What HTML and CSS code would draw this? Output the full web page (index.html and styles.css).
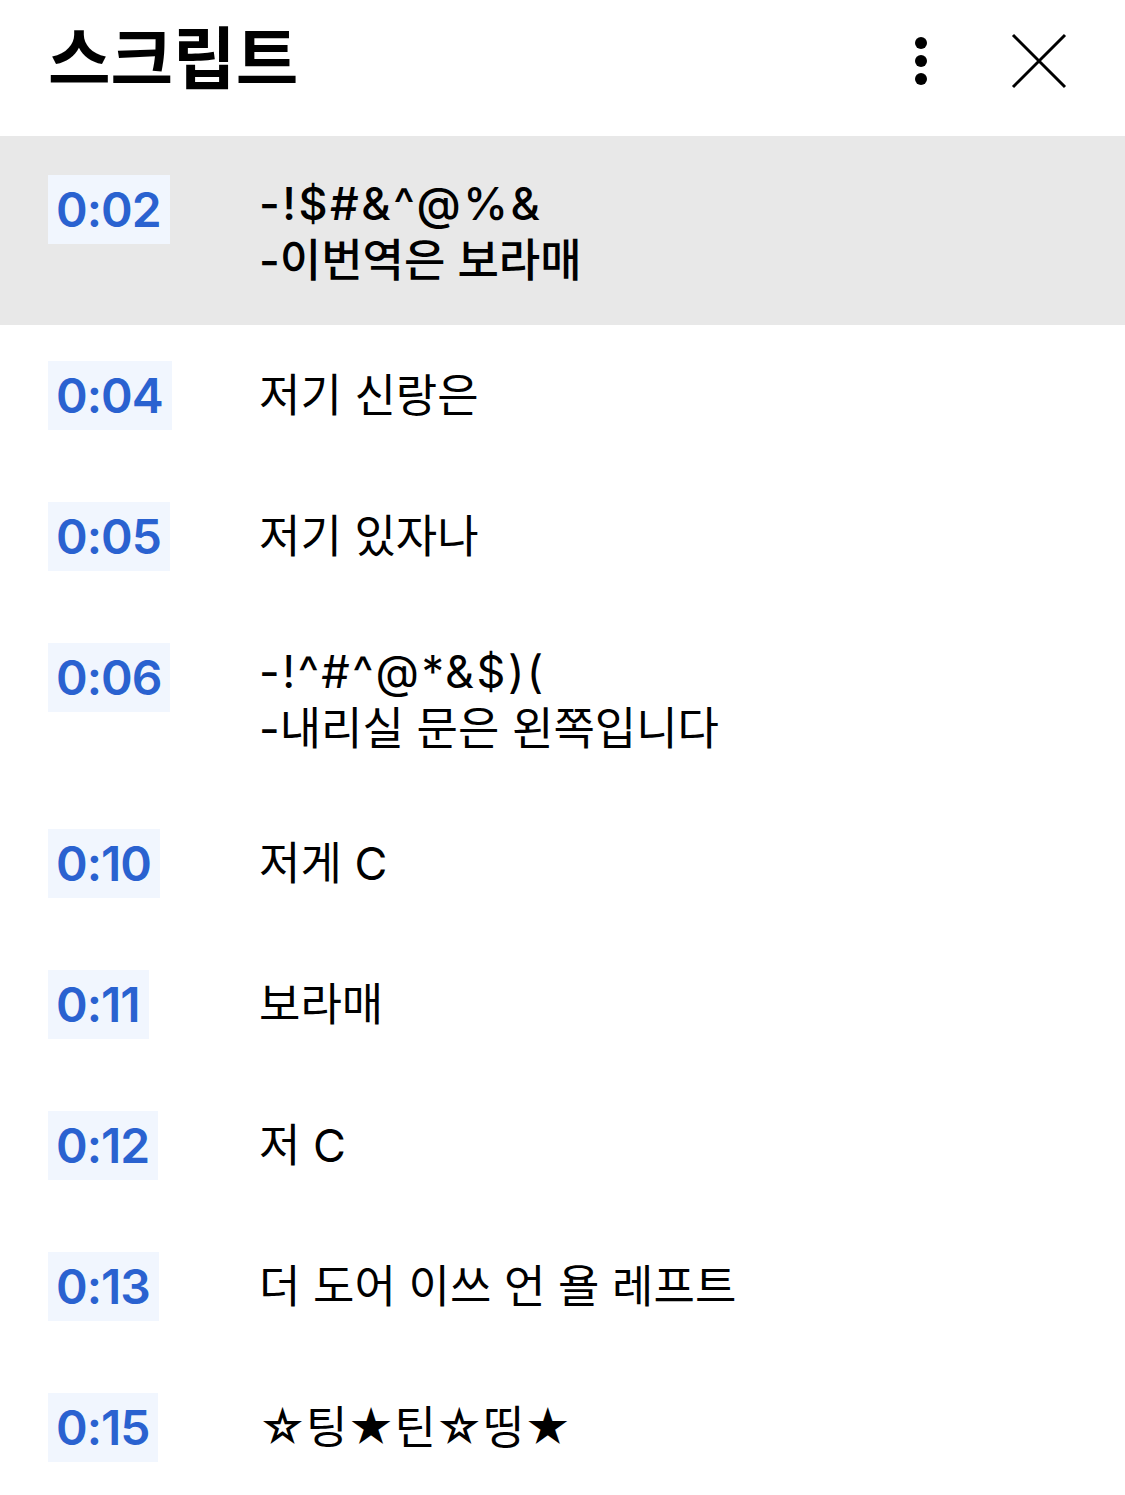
FILE: index.html
```html
<!DOCTYPE html>
<html>
<head>
    <title>스크립트</title>
    <link rel="stylesheet" href="styles.css">
</head>
<body>
    <div class="panel">
        <header class="top">
            <h1>스크립트</h1>
            <div class="actions">
                <button class="icon-btn" aria-label="더보기">
                    <svg width="20" height="56" viewBox="0 0 20 56">
                        <circle cx="10" cy="10" r="6"/>
                        <circle cx="10" cy="28" r="6"/>
                        <circle cx="10" cy="46" r="6"/>
                    </svg>
                </button>
                <button class="icon-btn close" aria-label="닫기">
                    <svg width="56" height="56" viewBox="0 0 56 56">
                        <path d="M2 2 L54 54 M54 2 L2 54" stroke="#000" stroke-width="3" fill="none"/>
                    </svg>
                </button>
            </div>
        </header>

        <ul class="lines">
            <li class="line active">
                <span class="time">0:02</span>
                <p><span><span class="sym">-!$#&amp;^@%&amp;</span><br>-이번역은 보라매</span></p>
            </li>
            <li class="line">
                <span class="time">0:04</span>
                <p><span>저기 신랑은</span></p>
            </li>
            <li class="line">
                <span class="time">0:05</span>
                <p><span>저기 있자나</span></p>
            </li>
            <li class="line">
                <span class="time">0:06</span>
                <p><span><span class="sym">-!^#^@*&amp;$)(</span><br>-내리실 문은 왼쪽입니다</span></p>
            </li>
            <li class="line">
                <span class="time">0:10</span>
                <p><span>저게 C</span></p>
            </li>
            <li class="line">
                <span class="time">0:11</span>
                <p><span>보라매</span></p>
            </li>
            <li class="line">
                <span class="time">0:12</span>
                <p><span>저 C</span></p>
            </li>
            <li class="line">
                <span class="time">0:13</span>
                <p><span>더 도어 이쓰 언 욜 레프트</span></p>
            </li>
            <li class="line">
                <span class="time">0:15</span>
                <p><span>☆팅★틴☆띵★</span></p>
            </li>
        </ul>
    </div>
</body>
</html>
```

FILE: styles.css
```css
* {
    box-sizing: border-box;
    margin: 0;
    padding: 0;
}

body {
    background-color: #fff;
    font-family: Inter, "Noto Sans CJK KR", sans-serif;
    color: #000;
}

.panel {
    width: 1125px;
}

.top {
    display: flex;
    align-items: center;
    justify-content: space-between;
    height: 136px;
    padding: 0 58px 0 48px;
}

.top h1 {
    font-family: "Noto Sans CJK KR", sans-serif;
    font-size: 68px;
    font-weight: 700;
    line-height: 1;
    margin-top: -27px;
}

.actions {
    display: flex;
    align-items: center;
    gap: 80px;
    margin-top: -14px;
}

.icon-btn {
    background: none;
    border: none;
    cursor: pointer;
    display: flex;
}

.icon-btn svg {
    fill: #000;
}

.lines {
    list-style: none;
}

.line {
    display: grid;
    grid-template-columns: 211px 1fr;
    align-items: start;
    padding: 36px 48px;
}

.line.active {
    background-color: #e8e8e8;
    padding-top: 39px;
}

.time {
    justify-self: start;
    background-color: #f1f6fe;
    color: #2a62d0;
    font-family: Inter, sans-serif;
    font-weight: 600;
    font-size: 48px;
    letter-spacing: -1px;
    line-height: 69px;
    padding: 0 9px 0 8px;
}

.line p {
    display: flex;
    align-items: center;
    min-height: 69px;
    font-size: 45px;
    line-height: 57px;
}

.line.active p {
    font-weight: 500;
}

.sym {
    letter-spacing: 2.5px;
}
```
